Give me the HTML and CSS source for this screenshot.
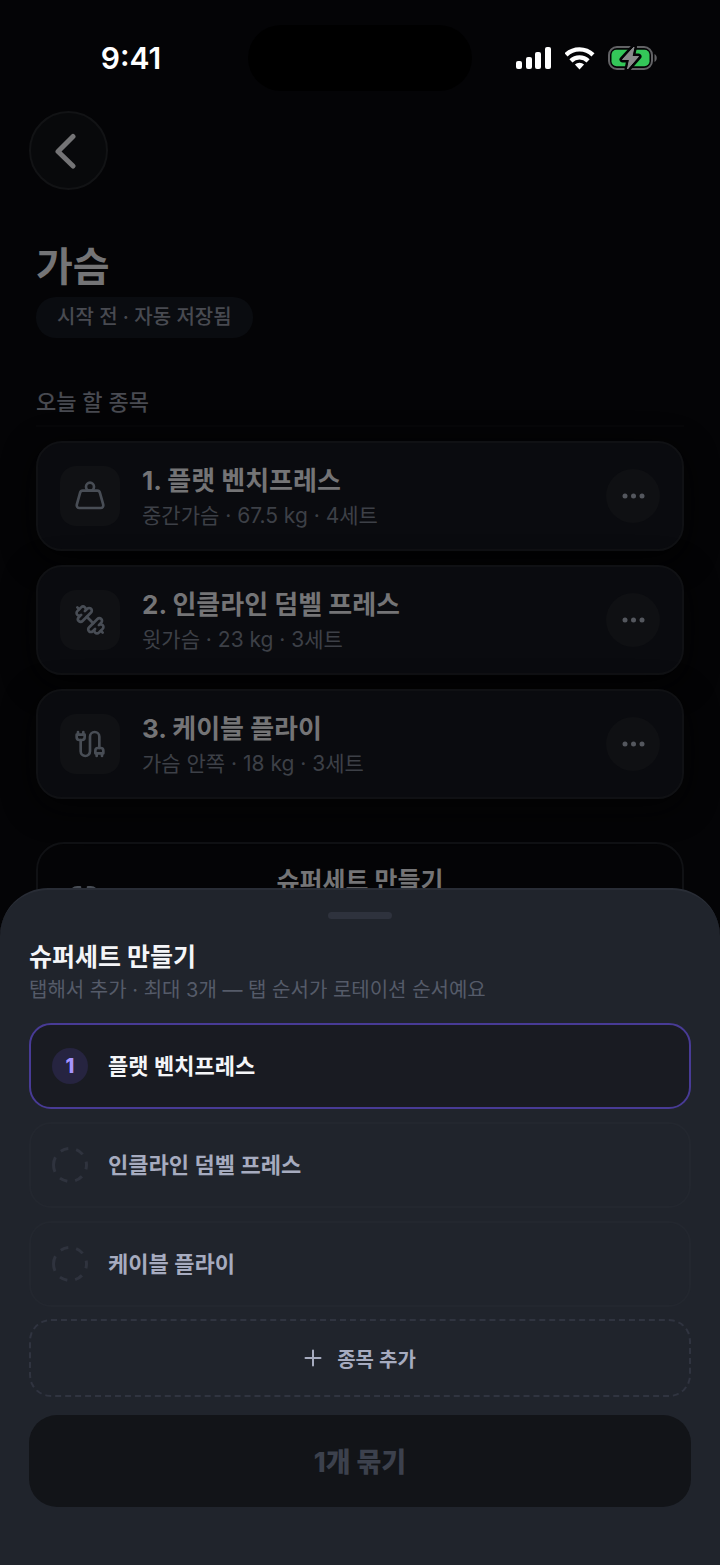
FILE: index.html
```html
<!DOCTYPE html>
<html lang="ko">
<head>
  <meta charset="UTF-8">
  <meta name="viewport" content="width=device-width, initial-scale=1.0">
  <title>가슴</title>
  <link rel="stylesheet" href="styles.css">
</head>
<body>
  <div class="status-bar">
    <div class="status-time">9:41</div>
    <div class="island"></div>
    <div class="status-icons">
      <svg width="36" height="24" viewBox="0 0 36 24" fill="#fff">
        <rect x="0" y="15" width="6" height="8" rx="2"/>
        <rect x="10" y="11" width="6" height="12" rx="2"/>
        <rect x="19" y="6" width="6" height="17" rx="2"/>
        <rect x="29" y="1" width="6" height="22" rx="2"/>
      </svg>
      <svg width="30" height="24" viewBox="0 0 30 24" fill="none" stroke="#fff" stroke-width="4.400">
        <path d="M1 8.800a19.500 19.500 0 0 1 27 0"/>
        <path d="M5.900 14.800a12.400 12.400 0 0 1 17.200 0"/>
        <path d="M9.900 18.600a6.800 6.800 0 0 1 9.200 0L14.500 23.500z" fill="#fff" stroke="none"/>
      </svg>
      <svg width="50" height="26" viewBox="0 0 50 26">
        <rect x="1" y="2" width="43" height="22" rx="8" fill="none" stroke="#626265" stroke-width="2"/>
        <path d="M46.500 9v8c3-1.500 3-6.500 0-8z" fill="#626265"/>
        <rect x="3.500" y="4.800" width="38" height="16.500" rx="5" fill="#34c759"/>
        <path d="M26 2 14.500 14.500H21.500L19.500 24 30.500 11.500H24z" fill="#8a8a8c" stroke="#040406" stroke-width="6" stroke-linejoin="round" paint-order="stroke"/>
        <path d="M26 2 14.500 14.500H21.500L19.500 24 30.500 11.500H24z" fill="#8a8a8c" stroke="#8a8a8c" stroke-width="1" stroke-linejoin="round"/>
      </svg>
    </div>
  </div>

  <main class="page">
    <button class="back-btn" aria-label="뒤로">
      <svg width="36" height="36" viewBox="0 0 36 36" fill="none" stroke="currentColor" stroke-width="5" stroke-linecap="round" stroke-linejoin="round">
        <path d="M23 3.500 8 18.500l15 14.500"/>
      </svg>
    </button>

    <div class="routine">
      <h1 class="routine-title">가슴</h1>
      <span class="save-state">시작 전 · 자동 저장됨</span>

      <h2 class="section-title">오늘 할 종목</h2>
      <ul class="card-list">
        <li class="card">
          <span class="card-icon">
            <svg class="icon" viewBox="0 0 24 24">
              <circle cx="12" cy="5" r="3"/>
              <path d="M6.500 8a2 2 0 0 0-1.905 1.460L2.100 18.500A2 2 0 0 0 4 21h16a2 2 0 0 0 1.925-2.540L19.400 9.500A2 2 0 0 0 17.480 8Z"/>
            </svg>
          </span>
          <div class="card-text">
            <h3 class="card-title">1. 플랫 벤치프레스</h3>
            <p class="card-sub">중간가슴 · 67.5 kg · 4세트</p>
          </div>
          <button class="more-btn" aria-label="더보기">
            <svg width="24" height="8" viewBox="0 0 24 8" fill="currentColor"><circle cx="4" cy="4" r="2.500"/><circle cx="12.500" cy="4" r="2.500"/><circle cx="21" cy="4" r="2.500"/></svg>
          </button>
        </li>
        <li class="card">
          <span class="card-icon">
            <svg class="icon" viewBox="0 0 24 24">
              <path d="M14.400 14.400 9.600 9.600"/>
              <path d="M18.657 21.485a2 2 0 1 1-2.829-2.828l-1.767 1.768a2 2 0 1 1-2.829-2.829l6.364-6.364a2 2 0 1 1 2.829 2.829l-1.768 1.767a2 2 0 1 1 2.828 2.829z"/>
              <path d="m21.500 21.500-1.400-1.400"/>
              <path d="M3.900 3.900 2.500 2.500"/>
              <path d="M6.404 12.768a2 2 0 1 1-2.829-2.829l1.768-1.767a2 2 0 1 1-2.828-2.829l2.828-2.828a2 2 0 1 1 2.829 2.828l1.767-1.768a2 2 0 1 1 2.829 2.829z"/>
            </svg>
          </span>
          <div class="card-text">
            <h3 class="card-title">2. 인클라인 덤벨 프레스</h3>
            <p class="card-sub">윗가슴 · 23 kg · 3세트</p>
          </div>
          <button class="more-btn" aria-label="더보기">
            <svg width="24" height="8" viewBox="0 0 24 8" fill="currentColor"><circle cx="4" cy="4" r="2.500"/><circle cx="12.500" cy="4" r="2.500"/><circle cx="21" cy="4" r="2.500"/></svg>
          </button>
        </li>
        <li class="card">
          <span class="card-icon">
            <svg class="icon" viewBox="0 0 24 24">
              <path d="M4 9a2 2 0 0 1-2-2V5h6v2a2 2 0 0 1-2 2Z"/>
              <path d="M3 5V3"/>
              <path d="M7 5V3"/>
              <path d="M19 15V6.500a3.500 3.500 0 0 0-7 0v11a3.500 3.500 0 0 1-7 0V9"/>
              <path d="M17 21v-2"/>
              <path d="M21 21v-2"/>
              <path d="M22 19h-6v-2a2 2 0 0 1 2-2h2a2 2 0 0 1 2 2Z"/>
            </svg>
          </span>
          <div class="card-text">
            <h3 class="card-title">3. 케이블 플라이</h3>
            <p class="card-sub">가슴 안쪽 · 18 kg · 3세트</p>
          </div>
          <button class="more-btn" aria-label="더보기">
            <svg width="24" height="8" viewBox="0 0 24 8" fill="currentColor"><circle cx="4" cy="4" r="2.500"/><circle cx="12.500" cy="4" r="2.500"/><circle cx="21" cy="4" r="2.500"/></svg>
          </button>
        </li>
      </ul>

      <button class="superset-btn">
        <svg class="icon superset-icon" viewBox="0 0 24 24">
          <path d="M9 17H7A5 5 0 0 1 7 7h2"/>
          <path d="M15 7h2a5 5 0 1 1 0 10h-2"/>
          <path d="M8 12h8"/>
        </svg>
        <span class="superset-label">슈퍼세트 만들기</span>
      </button>
    </div>
  </main>

  <section class="sheet" role="dialog" aria-labelledby="sheet-title">
    <div class="sheet-handle"></div>
    <h2 class="sheet-title" id="sheet-title">슈퍼세트 만들기</h2>
    <p class="sheet-sub">탭해서 추가 · 최대 3개 — 탭 순서가 로테이션 순서예요</p>

    <div class="pick-list">
      <button class="pick selected" aria-pressed="true">
        <span class="pick-order">1</span>
        <span class="pick-name">플랫 벤치프레스</span>
      </button>
      <button class="pick" aria-pressed="false">
        <svg class="pick-empty" viewBox="0 0 36 36"><path d="M1.500 18a16.500 16.500 0 0 1 33 0a16.500 16.500 0 0 1-33 0"/></svg>
        <span class="pick-name">인클라인 덤벨 프레스</span>
      </button>
      <button class="pick" aria-pressed="false">
        <svg class="pick-empty" viewBox="0 0 36 36"><path d="M1.500 18a16.500 16.500 0 0 1 33 0a16.500 16.500 0 0 1-33 0"/></svg>
        <span class="pick-name">케이블 플라이</span>
      </button>
    </div>

    <button class="add-btn">
      <svg width="18" height="18" viewBox="0 0 18 18" fill="none" stroke="currentColor" stroke-width="2" stroke-linecap="round">
        <path d="M9 1.500v15M1.500 9h15"/>
      </svg>
      종목 추가
    </button>
    <button class="submit-btn" disabled>1개 묶기</button>
  </section>
</body>
</html>
```

FILE: styles.css
```css
* {
  box-sizing: border-box;
}
body {
  margin: 0;
  height: 100vh;
  overflow: hidden;
  background-color: #040406;
  color: #747476;
  font-family: Inter, "Noto Sans CJK KR", sans-serif;
}
h1, h2, h3, p, ul {
  margin: 0;
  padding: 0;
}
ul {
  list-style: none;
}
button {
  font-family: inherit;
  cursor: pointer;
}
svg {
  display: block;
  flex-shrink: 0;
}

/* status bar */
.status-bar {
  display: grid;
  grid-template-columns: 1fr 224px 1fr;
  align-items: center;
  padding-top: 25px;
  margin-bottom: 20px;
}
.status-time {
  padding-left: 14px;
  text-align: center;
  font-size: 30px;
  font-weight: 600;
  line-height: 36px;
  color: #fff;
}
.island {
  height: 66px;
  border-radius: 33px;
  background-color: #000;
}
.status-icons {
  display: flex;
  align-items: center;
  gap: 13px;
  padding-left: 44px;
}

/* page */
.page {
  padding: 0 29px;
}
.back-btn {
  display: flex;
  align-items: center;
  justify-content: center;
  width: 79px;
  height: 79px;
  padding: 0;
  border: 2px solid #121315;
  border-radius: 50%;
  background-color: #08090b;
  color: #747476;
}
.back-btn svg {
  margin-right: 2px;
}
.routine {
  padding: 53px 7px 0;
}
.routine-title {
  font-size: 40px;
  font-weight: 700;
  line-height: 48px;
}
.save-state {
  display: block;
  width: fit-content;
  margin-top: 6px;
  padding: 0 21px;
  border-radius: 20px;
  background-color: #0a0c10;
  color: #484a51;
  font-size: 20px;
  font-weight: 500;
  line-height: 41px;
}
.section-title {
  margin: 50px 0 14px;
  padding-bottom: 9px;
  border-bottom: 2px solid #070709;
  color: #484a51;
  font-size: 22px;
  font-weight: 500;
  line-height: 28px;
}
.card-list {
  display: flex;
  flex-direction: column;
  gap: 14px;
}
.card {
  display: flex;
  align-items: center;
  gap: 22px;
  height: 110px;
  padding: 0 22px;
  border: 2px solid #101114;
  border-radius: 26px;
  background-color: #0a0b0f;
  box-shadow: 0 8px 32px #030303;
}
.card-icon {
  display: flex;
  align-items: center;
  justify-content: center;
  width: 60px;
  height: 60px;
  border-radius: 16px;
  background-color: #101114;
  color: #484d55;
}
.icon {
  width: 32px;
  height: 32px;
  fill: none;
  stroke: currentColor;
  stroke-width: 2;
  stroke-linecap: round;
  stroke-linejoin: round;
}
.card-text {
  flex: 1;
  padding-top: 4px;
}
.card-title {
  font-size: 26px;
  font-weight: 700;
  line-height: 36px;
}
.card-sub {
  color: #3d4047;
  font-size: 21px;
  line-height: 34px;
}
.more-btn {
  display: flex;
  align-items: center;
  justify-content: center;
  width: 54px;
  height: 54px;
  padding: 0;
  border: none;
  border-radius: 50%;
  background-color: #0f1013;
  color: #54575e;
}
.superset-btn {
  display: flex;
  align-items: center;
  width: 100%;
  height: 104px;
  margin-top: 43px;
  padding: 0 62px 0 30px;
  border: 2px solid #101114;
  border-radius: 28px;
  background-color: #040406;
  color: #747476;
}
.superset-icon {
  color: #484d55;
}
.superset-label {
  flex: 1;
  align-self: flex-start;
  padding-top: 19px;
  font-size: 25px;
  font-weight: 700;
  line-height: 36px;
}

/* bottom sheet */
.sheet {
  position: fixed;
  left: 0;
  right: 0;
  bottom: 0;
  padding: 22px 29px 58px;
  border-top: 2px solid #292d36;
  border-radius: 48px 48px 0 0;
  background-color: #20242c;
}
.sheet-handle {
  width: 64px;
  height: 7px;
  margin: 0 auto 21px;
  border-radius: 4px;
  background-color: #2e323d;
}
.sheet-title {
  color: #f4f5f8;
  font-size: 25px;
  font-weight: 700;
  line-height: 34px;
}
.sheet-sub {
  color: #555b69;
  font-size: 20px;
  line-height: 32px;
}
.pick-list {
  display: flex;
  flex-direction: column;
  gap: 13px;
  margin: 17px 0 12px;
}
.pick {
  display: flex;
  align-items: center;
  gap: 20px;
  width: 100%;
  height: 86px;
  padding: 0 21px;
  border: 2px solid #23272f;
  border-radius: 22px;
  background-color: transparent;
  color: #a6abbf;
  font-size: 22px;
  font-weight: 600;
}
.pick.selected {
  border-color: #483b96;
  background-color: #191b22;
  color: #f4f5f8;
}
.pick-name {
  padding-bottom: 5px;
}
.pick-order {
  width: 36px;
  border-radius: 50%;
  background-color: #262440;
  color: #a695ff;
  font-size: 20px;
  font-weight: 800;
  line-height: 36px;
  text-align: center;
}
.pick-empty {
  width: 36px;
  height: 36px;
  fill: none;
  stroke: #2f333e;
  stroke-width: 3;
  stroke-dasharray: 8 8;
}
.add-btn {
  display: flex;
  align-items: center;
  justify-content: center;
  gap: 15px;
  width: 100%;
  height: 78px;
  border: 2px dashed #303440;
  border-radius: 22px;
  background-color: transparent;
  color: #a6abbf;
  font-size: 20px;
  font-weight: 600;
}
.submit-btn {
  width: 100%;
  height: 92px;
  margin-top: 18px;
  padding-bottom: 2px;
  border: none;
  border-radius: 28px;
  background-color: #121418;
  color: #3c414d;
  font-size: 27px;
  font-weight: 800;
}
```
